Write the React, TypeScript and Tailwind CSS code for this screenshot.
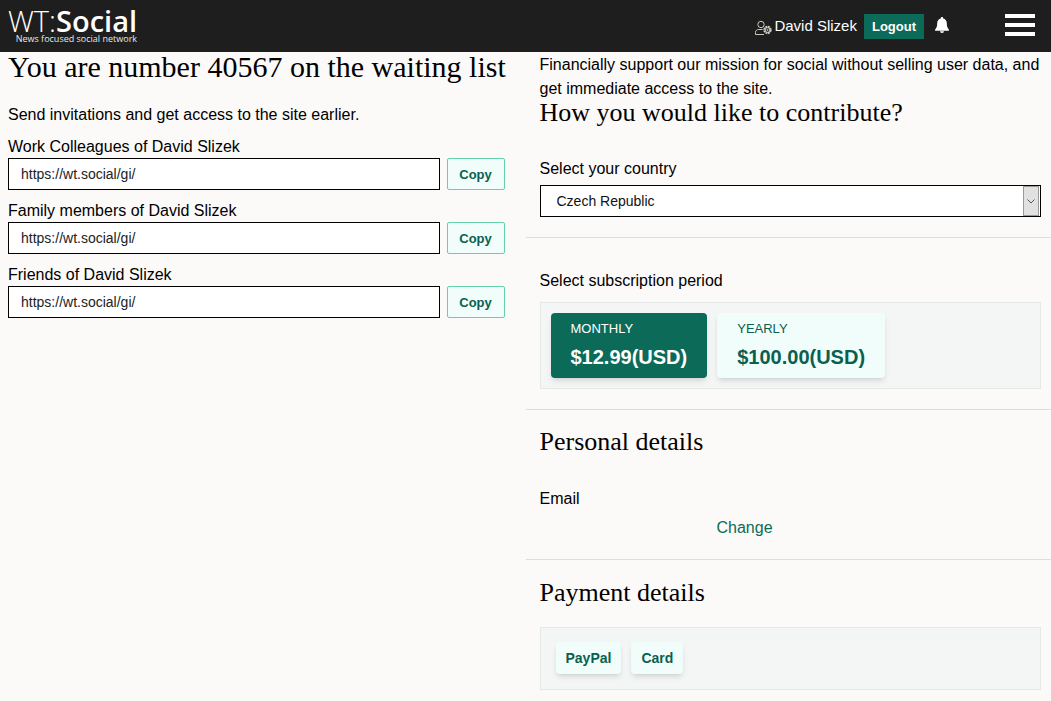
import React, { useState } from 'react';

const inviteLinks = [
  { id: 'work', label: 'Work Colleagues of David Slizek', url: 'https://wt.social/gi/' },
  { id: 'family', label: 'Family members of David Slizek', url: 'https://wt.social/gi/' },
  { id: 'friends', label: 'Friends of David Slizek', url: 'https://wt.social/gi/' },
];

const plans = [
  { id: 'monthly', name: 'MONTHLY', price: '$12.99(USD)' },
  { id: 'yearly', name: 'YEARLY', price: '$100.00(USD)' },
];

const paymentMethods = ['PayPal', 'Card'];

const headingFont = "font-['Liberation_Serif','Times_New_Roman',serif]";

const Header: React.FC = () => (
  <header className="flex h-[52px] items-center justify-between bg-[#1e1e1e] pl-2 pr-4 text-white">
    <a href="#" className="flex flex-col items-end font-['Open_Sans',sans-serif]">
      <span className="text-[29px] leading-[26px]">
        <span className="font-light">WT:</span>
        <span className="font-semibold">Social</span>
      </span>
      <span className="text-[9px] leading-[10px] text-[#e8e8e8]">News focused social network</span>
    </a>

    <nav className="flex items-center">
      <a href="#" className="flex items-center gap-0.5">
        <svg className="mt-1 h-[18px] w-[18px]" viewBox="0 0 18 18" fill="none" stroke="#c9c9c0">
          <circle cx="7" cy="5.5" r="3.2" />
          <path d="M10 15.500H1.500v-2.200c0-1.800 1.400-2.800 3.300-2.800h3.700" />
          <circle cx="13.500" cy="11" r="3.200" strokeWidth="2" strokeDasharray="1.900 0.610" />
          <circle cx="13.500" cy="11" r="2.400" />
          <circle cx="13.500" cy="11" r="0.600" />
        </svg>
        <span className="text-[15px]">David Slizek</span>
      </a>
      <button type="button" className="ml-[7px] h-[25px] bg-[#0b6b58] px-2 pt-0.5 text-[13px] font-bold">
        Logout
      </button>
      <button type="button" aria-label="Notifications" className="mb-0.5 ml-[10px]">
        <svg className="h-4 w-4" viewBox="0 0 16 16" fill="#fff">
          <path d="M8 0c-.7 0-1.200.5-1.200 1.200v.4C4.600 2.100 3.200 4 3.200 6.300c0 3.200-.7 4.900-2 6.100-.5.500-.2 1.300.5 1.300h12.600c.7 0 1-.8.5-1.300-1.300-1.200-2-2.900-2-6.100 0-2.300-1.400-4.200-3.600-4.700v-.4C9.200.5 8.700 0 8 0zM6 14.300a2 1.700 0 0 0 4 0z" />
        </svg>
      </button>
      <button type="button" aria-label="Menu" className="mb-0.5 ml-[55px] flex w-[30px] flex-col gap-[5px]">
        <span className="h-1 bg-white" />
        <span className="h-1 bg-white" />
        <span className="h-1 bg-white" />
      </button>
    </nav>
  </header>
);

const App: React.FC = () => {
  const [activePlan, setActivePlan] = useState('monthly');

  return (
    <div className="min-h-screen bg-[#fcfaf8] font-['Liberation_Sans',Arial,sans-serif] text-base text-black">
      <Header />

      <main className="grid grid-cols-2 pt-px">
        {/* Waiting list and invitations */}
        <section className="pl-2 pr-[21px]">
          <h1 className={`whitespace-nowrap text-3xl leading-7 ${headingFont}`}>
            You are number 40567 on the waiting list
          </h1>
          <p className="mt-[22px]">Send invitations and get access to the site earlier.</p>

          {inviteLinks.map((link, index) => (
            <div key={link.id} className={index === 0 ? 'mt-2' : 'mt-[9px]'}>
              <label htmlFor={link.id} className="block h-[23px]">{link.label}</label>
              <div className="flex gap-[7px]">
                <input
                  id={link.id}
                  readOnly
                  value={link.url}
                  className="h-8 min-w-0 flex-1 border border-black bg-white px-3 text-sm text-[#222]"
                />
                <button
                  type="button"
                  className="h-8 w-[58px] rounded-xs border border-[#63d1ae] bg-[#f0fdfa] pt-0.5 text-[13px] font-bold text-[#0b5f50]"
                >
                  Copy
                </button>
              </div>
            </div>
          ))}
        </section>

        {/* Contribution form */}
        <section>
          <div className="border-b border-[#dedede] pb-5 pl-[14px] pr-[10px]">
            <p>
              Financially support our mission for social without selling user data, and get immediate
              access to the site.
            </p>
            <h2 className={`text-[26px] leading-6 ${headingFont}`}>
              How you would like to contribute?
            </h2>
            <label htmlFor="country" className="mt-8 block">Select your country</label>
            <div className="relative mt-1">
              <select
                id="country"
                className="block h-8 w-full appearance-none border border-black bg-white px-4 text-sm text-[#111]"
              >
                <option>Czech Republic</option>
              </select>
              <span className="pointer-events-none absolute inset-y-px right-0.5 flex w-4 items-center justify-center border border-[#999] bg-[#e1e1e1]">
                <svg className="h-2 w-2" viewBox="0 0 8 8" fill="none" stroke="#555">
                  <path d="M0.500 2.500L4 6l3.500-3.500" />
                </svg>
              </span>
            </div>
          </div>

          <div className="border-b border-[#dedede] pb-5 pl-[14px] pr-[10px] pt-[31px]">
            <p>Select subscription period</p>
            <div className="mt-[9px] flex gap-[10px] border border-[#e4e8e7] bg-[#f4f6f5] p-[10px]">
              {plans.map((plan) => (
                <button
                  key={plan.id}
                  type="button"
                  onClick={() => setActivePlan(plan.id)}
                  className={`h-[65px] rounded px-5 text-left shadow-md ${
                    plan.id === activePlan ? 'bg-[#0b6b58] text-white' : 'bg-[#f0fdfa] text-[#0b5f50]'
                  }`}
                >
                  <span className="block text-[13px] leading-4">{plan.name}</span>
                  <span className="mt-1.5 block text-xl font-bold">{plan.price}</span>
                </button>
              ))}
            </div>
          </div>

          <div className="border-b border-[#dedede] pb-[19px] pl-[14px] pr-[10px] pt-5">
            <h2 className={`text-[26px] leading-6 ${headingFont}`}>Personal details</h2>
            <p className="mt-[33px]">Email</p>
            <div className="mt-[5px] flex pl-[177px]">
              <a href="#" className="text-[#0b6b58]">Change</a>
            </div>
          </div>

          <div className="pb-[11px] pl-[14px] pr-[10px] pt-[21px]">
            <h2 className={`text-[26px] leading-6 ${headingFont}`}>Payment details</h2>
            <div className="mt-[22px] flex gap-[10px] border border-[#e4e8e7] bg-[#f4f6f5] px-[15px] pb-[15px] pt-[14px]">
              {paymentMethods.map((method) => (
                <button
                  key={method}
                  type="button"
                  className="h-8 rounded bg-[#f0fdfa] px-[10px] text-sm font-bold text-[#0b5f50] shadow-md"
                >
                  {method}
                </button>
              ))}
            </div>
          </div>
        </section>
      </main>
    </div>
  );
};

export default App;
